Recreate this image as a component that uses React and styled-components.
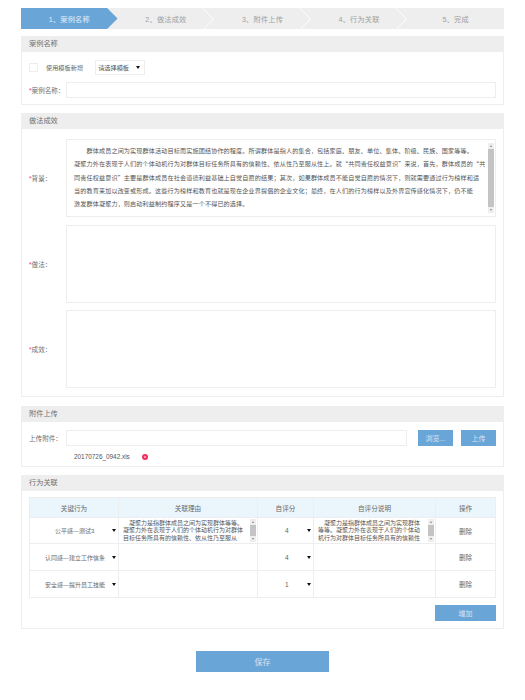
import React from "react";
import styled, { createGlobalStyle } from "styled-components";

const Global = createGlobalStyle`
  html, body { margin: 0; padding: 0; background: #fff; }
  * { box-sizing: border-box; }
  body { font-family: "Liberation Sans", "Noto Sans CJK SC", sans-serif; font-size: 6.7px; color: #666; }
`;
const Page = styled.div`
  width: 525px; height: 700px; padding: 8px 21px 0; display: flex; flex-direction: column; overflow: hidden;
`;
const Steps = styled.div`display: flex; height: 21px; background: #eee; margin-bottom: 7px;`;
const Step = styled.div`
  position: relative; flex: 1; display: flex; align-items: center; justify-content: center;
  font-size: 7.2px; letter-spacing: .2px;
  color: ${p => (p.$active ? "#e3eff9" : "#a0a0a0")};
  background: ${p => (p.$active ? "#6aa5d8" : "transparent")};
  clip-path: ${p => (p.$active ? "polygon(0 0, calc(100% - 10.5px) 0, 100% 50%, calc(100% - 10.5px) 100%, 0 100%)" : "none")};
  &::after {
    content: ""; display: ${p => (p.$last || p.$active ? "none" : "block")}; position: absolute;
    top: 3px; right: 3px; width: 15px; height: 15px; transform: rotate(45deg);
    border-top: 1px solid #f9f9f9; border-right: 1px solid #f9f9f9;
  }
`;
const Panel = styled.section`
  border: 1px solid #eee; border-top: 0; height: ${p => p.$h}px; margin-bottom: ${p => p.$mb}px; flex: none;
`;
const PanelTitle = styled.h2`
  margin: 0 -1px; height: 16px; line-height: 16px; background: #eee; padding: 0 8px;
  font-size: 7.2px; font-weight: normal; color: #707070;
`;
const Row = styled.div`display: flex; align-items: center; padding: ${p => p.$pad};`;
const Check = styled.span`width: 9px; height: 9px; border: 1px solid #eee; flex: none;`;
const Small = styled.span`margin: 0 12px 0 8px; color: #666; font-size: 6.2px;`;
const SelectBox = styled.div`
  width: 50px; height: 15px; border: 1px solid #eee; display: flex; align-items: center; justify-content: space-between;
  padding: 0 4px 0 2px; color: #555; flex: none; font-size: 6.2px;
`;
const Arrow = styled.i`
  width: 0; height: 0; border-left: 2px solid transparent; border-right: 2px solid transparent; border-top: 3px solid #111; flex: none;
`;
const Label = styled.label`width: 37px; flex: none; color: #707070; font-size: 6.6px; white-space: nowrap;`;
const Star = styled.span`color: #e8406a;`;
const Input = styled.div`height: 16px; border: 1px solid #eee; flex: 1;`;
const AreaWrap = styled.div`
  position: relative; flex: 1; height: 78px; border: 1px solid #eee; padding: 4px 12px 0 7px;
  line-height: 13.35px; font-size: 6.1px; letter-spacing: .14px; color: #555; overflow: hidden; white-space: pre;
  font-family: "Noto Sans CJK SC", sans-serif;
`;
const Bar = styled.div`
  position: absolute; top: ${p => p.$top}px; right: ${p => p.$right}px; bottom: ${p => p.$bottom}px; width: 6px;
  background: linear-gradient(#eee 6px, #c4c4c4 6px, #c4c4c4 calc(100% - 6px), #eee calc(100% - 6px));
  &::before, &::after { content: ""; position: absolute; left: 1.5px; border-left: 1.5px solid transparent; border-right: 1.5px solid transparent; }
  &::before { top: 2px; border-bottom: 2px solid #888; }
  &::after { bottom: 2px; border-top: 2px solid #888; }
`;
const Button = styled.button`
  border: 0; padding: 0; background: #6aa5d8; color: #d5e6f5; font: inherit; font-size: ${p => p.$fs || 7}px;
  width: ${p => p.$w}px; height: ${p => p.$h}px; flex: none; margin-left: ${p => p.$ml || 0}px;
`;
const FileRow = styled.div`display: flex; align-items: center; padding: 7px 0 0 52px; color: #555; font-size: 6.4px;`;
const Dot = styled.span`width: 6px; height: 6px; border-radius: 50%; background: #f0305f; margin-left: 12px; display: flex; align-items: center; justify-content: center;
  &::after { content: ""; width: 2px; height: 2px; background: #fbb; border-radius: 50%; }
`;
const Table = styled.div`
  margin: 6px 7px 0; border: 1px solid #eee; border-bottom: 0; display: grid;
  grid-template-columns: 89px 139px 56px 122px 1fr; grid-template-rows: 20px 26px 27px 27px;
`;
const Head = styled.div`
  background: #ebf6fc; display: flex; align-items: center; justify-content: center; color: #666; font-size: 6.6px;
  border-right: ${p => (p.$last ? 0 : "1px solid #eee")}; border-bottom: 1px solid #eee;
`;
const Cell = styled.div`
  position: relative; display: flex; align-items: center; justify-content: ${p => p.$center ? "center" : "flex-start"};
  border-right: ${p => (p.$last ? 0 : "1px solid #eee")}; border-bottom: 1px solid #eee; color: #666; font-size: ${p => p.$fs || 6}px; overflow: hidden;
`;
const CellSelect = styled.div`
  flex: 1; display: flex; justify-content: space-between; align-items: center; padding: 0 2px 0 ${p => p.$pl}px;
`;
const CellText = styled.div`
  padding: 2px 0 0 4px; line-height: 7.4px; font-size: 6px; color: #555; align-self: flex-start; white-space: pre;
`;
const AddRow = styled.div`display: flex; justify-content: flex-end; padding: 7px 7px 0;`;
const Center = styled.div`display: flex; justify-content: center; padding-top: 2px;`;

const bg = [
  "　　群体成员之间为实现群体活动目标而实施团结协作的程度。所谓群体是指人的集合，包括家庭、朋友、单位、集体、阶级、民族、国家等等。",
  "凝聚力外在表现于人们的个体动机行为对群体目标任务所具有的信赖性、依从性乃至服从性上。就“共同责任权益意识”来说，首先，群体成员的“共",
  "同责任权益意识”主要是群体成员在社会道德利益基础上自觉自愿的结果；其次，如果群体成员不能自觉自愿的情况下，则就需要通过行为榜样和适",
  "当的教育来加以改变或形成。这些行为榜样和教育也就是现在企业界提倡的企业文化；最终，在人们的行为榜样以及外界宣传感化情况下，仍不能",
  "激发群体凝聚力，则启动利益制约程序又是一个不得已的选择。",
].join("\n");
const steps = ["1、案例名称", "2、做法成效", "3、附件上传", "4、行为关联", "5、完成"];
const heads = ["关键行为", "关联理由", "自评分", "自评分说明", "操作"];
const rows = [
  { name: "公平感—测试3", pl: 25, score: "4", filled: true },
  { name: "认同感—建立工作信条", pl: 15, score: "4" },
  { name: "安全感—提升员工技能", pl: 15, score: "1" },
];
const short1 = "　凝聚力是指群体成员之间为实现群体等等。\n凝聚力外在表现于人们的个体动机行为对群体\n目标任务所具有的信赖性、依从性乃至服从";
const short2 = "　凝聚力是指群体成员之间为实现群体\n等等。凝聚力外在表现于人们的个体动\n机行为对群体目标任务所具有的信赖性";

export default function App() {
  return (
    <Page>
      <Global />
      <Steps>
        {steps.map((s, i) => <Step key={s} $active={i === 0} $last={i === 4}>{s}</Step>)}
      </Steps>
      <Panel $h={69} $mb={8}>
        <PanelTitle>案例名称</PanelTitle>
        <Row $pad="8px 7px 0">
          <Check /><Small>使用模板新增</Small>
          <SelectBox>请选择模板<Arrow /></SelectBox>
        </Row>
        <Row $pad="7px 7px 0">
          <Label><Star>*</Star>案例名称：</Label><Input />
        </Row>
      </Panel>
      <Panel $h={284} $mb={9}>
        <PanelTitle>做法成效</PanelTitle>
        <Row $pad="10px 7px 0">
          <Label><Star>*</Star>背景：</Label>
          <AreaWrap>{bg}<Bar $top={3} $right={1} $bottom={3} /></AreaWrap>
        </Row>
        <Row $pad="8px 7px 0"><Label><Star>*</Star>做法：</Label><AreaWrap /></Row>
        <Row $pad="7px 7px 0"><Label><Star>*</Star>成效：</Label><AreaWrap /></Row>
      </Panel>
      <Panel $h={61} $mb={8}>
        <PanelTitle>附件上传</PanelTitle>
        <Row $pad="8px 7px 0">
          <Label>上传附件：</Label><Input />
          <Button $w={35} $h={16} $ml={11}>浏览...</Button>
          <Button $w={35} $h={16} $ml={8}>上传</Button>
        </Row>
        <FileRow>20170726_0942.xls<Dot /></FileRow>
      </Panel>
      <Panel $h={154} $mb={20}>
        <PanelTitle>行为关联</PanelTitle>
        <Table>
          {heads.map((h, i) => <Head key={h} $last={i === 4}>{h}</Head>)}
          {rows.map(r => (
            <React.Fragment key={r.name}>
              <Cell><CellSelect $pl={r.pl}>{r.name}<Arrow /></CellSelect></Cell>
              <Cell>
                {r.filled && <><CellText>{short1}</CellText><Bar $top={1} $right={1} $bottom={1} /></>}
              </Cell>
              <Cell $fs={6.6}><CellSelect $pl={27}>{r.score}<Arrow /></CellSelect></Cell>
              <Cell>
                {r.filled && <><CellText>{short2}</CellText><Bar $top={1} $right={1} $bottom={1} /></>}
              </Cell>
              <Cell $center $last $fs={6.6}>删除</Cell>
            </React.Fragment>
          ))}
        </Table>
        <AddRow><Button $w={61} $h={16}>增加</Button></AddRow>
      </Panel>
      <Center><Button $w={133} $h={21} $fs={8}>保存</Button></Center>
    </Page>
  );
}
